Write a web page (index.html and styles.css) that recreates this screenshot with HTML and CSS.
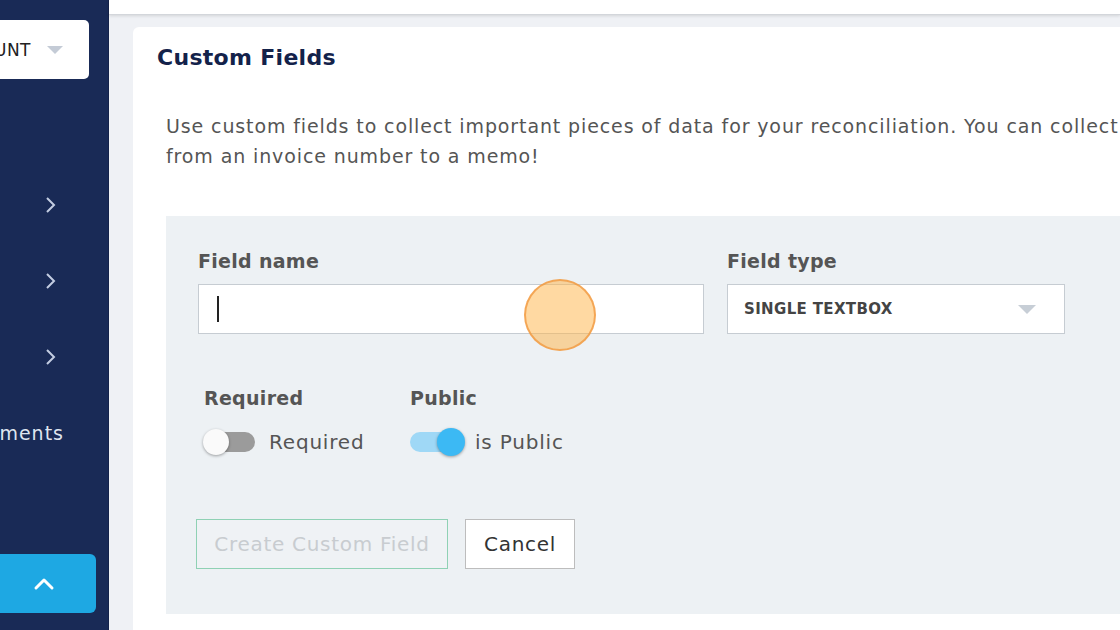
FILE: index.html
```html
<!DOCTYPE html>
<html lang="en">
<head>
    <meta charset="UTF-8">
    <title>Custom Fields</title>
    <link rel="stylesheet" href="styles.css">
</head>
<body>

<!-- Left navigation (scrolled, only the right edge is visible) -->
<div class="sidebar">
    <div class="sidebar-inner">
        <div class="account-select">
            <span>ACCOUNT</span>
            <span class="caret"></span>
        </div>
        <div class="nav-item">
            <span>Banking</span>
            <svg width="12" height="18" viewBox="0 0 12 18"><path d="M2 2 L9 9 L2 16" fill="none" stroke="#c3cde2" stroke-width="2"/></svg>
        </div>
        <div class="nav-item">
            <span>Reports</span>
            <svg width="12" height="18" viewBox="0 0 12 18"><path d="M2 2 L9 9 L2 16" fill="none" stroke="#c3cde2" stroke-width="2"/></svg>
        </div>
        <div class="nav-item">
            <span>Settings</span>
            <svg width="12" height="18" viewBox="0 0 12 18"><path d="M2 2 L9 9 L2 16" fill="none" stroke="#c3cde2" stroke-width="2"/></svg>
        </div>
        <div class="nav-item nav-text">Documents</div>
        <div class="collapse-btn">
            <svg width="22" height="14" viewBox="0 0 22 14"><path d="M3 11 L11 3 L19 11" fill="none" stroke="#fff" stroke-width="3" stroke-linecap="round" stroke-linejoin="round"/></svg>
        </div>
    </div>
</div>

<div class="main">
    <div class="topbar"></div>
    <div class="content">
        <div class="card">
            <h2 class="card-title">Custom Fields</h2>
            <p class="intro">Use custom fields to collect important pieces of data for your reconciliation. You can collect<br>from an invoice number to a memo!</p>

            <div class="form-panel">
                <div class="field-row">
                    <div class="field field-name">
                        <label>Field name</label>
                        <div class="input"><span class="text-cursor"></span></div>
                    </div>
                    <div class="field field-type">
                        <label>Field type</label>
                        <div class="select">
                            <span>SINGLE TEXTBOX</span>
                            <span class="caret"></span>
                        </div>
                    </div>
                </div>

                <div class="toggle-row">
                    <div class="toggle-group">
                        <label>Required</label>
                        <div class="toggle">
                            <span class="switch"><span class="knob"></span></span>
                            <span>Required</span>
                        </div>
                    </div>
                    <div class="toggle-group">
                        <label>Public</label>
                        <div class="toggle">
                            <span class="switch on"><span class="knob"></span></span>
                            <span>is Public</span>
                        </div>
                    </div>
                </div>

                <div class="buttons">
                    <button class="btn btn-create" disabled>Create Custom Field</button>
                    <button class="btn btn-cancel">Cancel</button>
                </div>
            </div>
        </div>
    </div>
</div>

<!-- Click indicator -->
<div class="click-dot"></div>

</body>
</html>
```

FILE: styles.css
```css
body {
    margin: 0;
    width: 1120px;
    height: 630px;
    display: flex;
    overflow: hidden;
    font-family: "DejaVu Sans", sans-serif;
    background-color: #eff1f5;
    position: relative;
}

/* Left navigation */
.sidebar {
    width: 108px;
    flex-shrink: 0;
    background-color: #192a56;
    overflow: hidden;
    border-right: 1px solid #14224a;
}
.sidebar-inner {
    width: 250px;
    margin-left: -142px;
    padding-top: 20px;
}
.account-select {
    width: 215px;
    height: 59px;
    margin-left: 16px;
    background-color: #fff;
    border-radius: 5px;
    display: flex;
    align-items: center;
    justify-content: flex-end;
    padding-right: 26px;
    box-sizing: border-box;
    font-size: 17px;
    letter-spacing: 0.5px;
    color: #222;
    gap: 16px;
}
.account-select .caret {
    border-left: 8px solid transparent;
    border-right: 8px solid transparent;
    border-top: 8px solid #c4cbd6;
}
.nav-item {
    height: 76px;
    display: flex;
    align-items: center;
    justify-content: space-between;
    padding: 0 51px 0 20px;
    color: #dfe5f0;
    font-size: 19px;
    letter-spacing: 1px;
}
.nav-item span {
    visibility: hidden;
}
.nav-item:nth-child(2) {
    margin-top: 88px;
}
.nav-text {
    justify-content: flex-end;
    padding-right: 44px;
}
.collapse-btn {
    width: 238px;
    height: 59px;
    margin-top: 83px;
    background-color: #1ea8e3;
    border-radius: 0 6px 6px 0;
    display: flex;
    align-items: center;
    justify-content: flex-end;
    padding-right: 41px;
    box-sizing: border-box;
}

/* Main area */
.main {
    flex: 1;
    display: flex;
    flex-direction: column;
    min-width: 0;
}
.topbar {
    height: 14px;
    background-color: #fff;
    border-bottom: 1px solid #d3d6db;
    box-shadow: 0 1px 3px rgba(0, 0, 0, 0.12);
    flex-shrink: 0;
}
.content {
    padding: 12px 0 0 24px;
    flex: 1;
}
.card {
    width: 1100px;
    height: 100%;
    background-color: #fff;
    border-radius: 6px 0 0 0;
    padding: 16px 0 0 24px;
    box-sizing: border-box;
}
.card-title {
    margin: 0;
    font-size: 22px;
    letter-spacing: 0.3px;
    line-height: 30px;
    font-weight: 700;
    color: #13224a;
}
.intro {
    margin: 38px 0 0 9px;
    font-size: 19px;
    letter-spacing: 0.88px;
    line-height: 30px;
    color: #555;
}

/* Form panel */
.form-panel {
    margin: 45px 0 0 9px;
    background-color: #edf1f4;
    height: 398px;
    padding: 33px 0 0 32px;
    box-sizing: border-box;
}
.form-panel label {
    display: block;
    font-size: 19px;
    letter-spacing: 0.3px;
    line-height: 24px;
    font-weight: 700;
    color: #555;
}
.field-row {
    display: flex;
    gap: 23px;
}
.field label {
    margin-bottom: 11px;
}
.input, .select {
    height: 50px;
    box-sizing: border-box;
    background-color: #fff;
    border: 1px solid #c6ccd2;
    display: flex;
    align-items: center;
}
.input {
    width: 506px;
    padding-left: 18px;
}
.text-cursor {
    width: 2px;
    height: 26px;
    background-color: #222;
}
.select {
    width: 338px;
    padding: 0 28px 0 16px;
    justify-content: space-between;
    font-size: 15px;
    letter-spacing: 0.35px;
    font-weight: 700;
    color: #444;
}
.select .caret {
    border-left: 9px solid transparent;
    border-right: 9px solid transparent;
    border-top: 9px solid #c7ced6;
}

.toggle-row {
    display: flex;
    margin-top: 52px;
    padding-left: 6px;
}
.toggle-group:first-child {
    width: 206px;
}
.toggle-group label {
    margin-bottom: 20px;
}
.toggle {
    display: flex;
    align-items: center;
    gap: 14px;
    font-size: 20px;
    letter-spacing: 0.8px;
    color: #555;
}
.switch {
    width: 51px;
    height: 20px;
    border-radius: 10px;
    background-color: #9b9b9b;
    position: relative;
}
.switch .knob {
    position: absolute;
    top: -3px;
    left: -1px;
    width: 26px;
    height: 26px;
    border-radius: 50%;
    background-color: #fafafa;
    box-shadow: 0 1px 3px rgba(0, 0, 0, 0.35);
}
.switch.on {
    background-color: #9fd8f6;
}
.switch.on .knob {
    left: auto;
    right: -4px;
    background-color: #3cb9f4;
    top: -4px;
    width: 28px;
    height: 28px;
}

.buttons {
    display: flex;
    gap: 17px;
    margin-top: 65px;
}
.btn {
    height: 50px;
    font-family: "DejaVu Sans", sans-serif;
    font-size: 20px;
    letter-spacing: 0.7px;
    padding: 0 8px;
    box-sizing: border-box;
    border-radius: 0;
}
.btn-create {
    width: 252px;
    margin-left: -2px;
    background-color: #eff2f5;
    border: 1px solid #8fd1b4;
    color: #c8ccd0;
}
.btn-cancel {
    width: 110px;
    background-color: #fff;
    border: 1px solid #bdbdbd;
    color: #333;
}

/* Click indicator */
.click-dot {
    position: absolute;
    left: 524px;
    top: 279px;
    width: 68px;
    height: 68px;
    border-radius: 50%;
    background-color: rgba(255, 180, 70, 0.5);
    border: 2px solid rgba(240, 150, 60, 0.75);
}
```
